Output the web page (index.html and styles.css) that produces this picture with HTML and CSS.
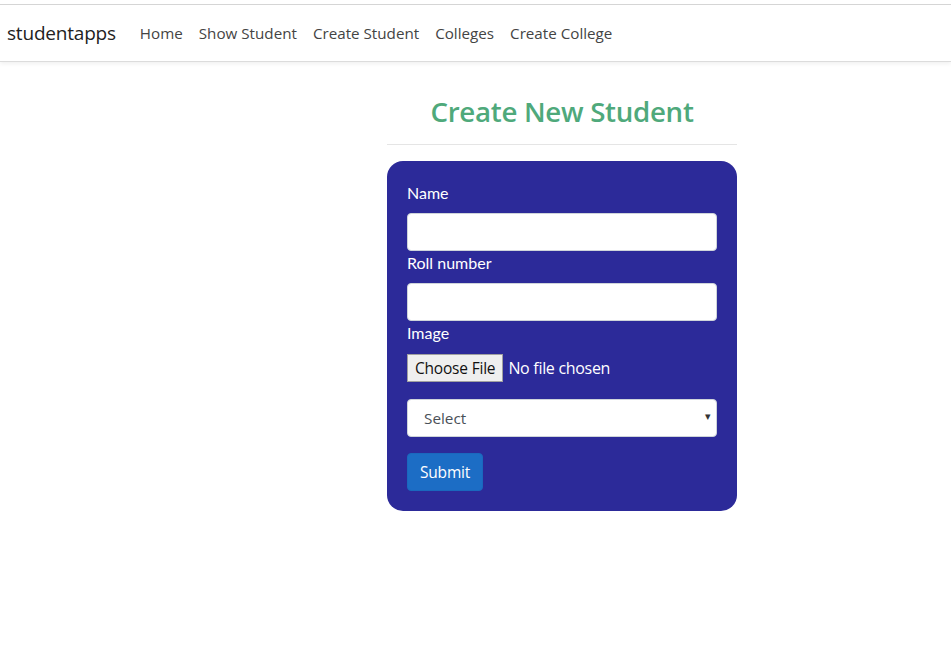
FILE: index.html
```html
<!DOCTYPE html>
<html lang="en">
<head>
<meta charset="utf-8">
<title>studentapps</title>
<link rel="stylesheet" href="styles.css">
</head>
<body>
<div class="topgap"></div>
<nav class="navbar">
  <a class="brand" href="#">studentapps</a>
  <ul class="nav">
    <li><a href="#">Home</a></li>
    <li><a href="#">Show Student</a></li>
    <li><a href="#">Create Student</a></li>
    <li><a href="#">Colleges</a></li>
    <li><a href="#">Create College</a></li>
  </ul>
</nav>
<main class="main">
  <h1 class="title">Create New Student</h1>
  <hr class="rule">
  <form class="card">
    <label class="label" for="name">Name</label>
    <input class="field" id="name" type="text">
    <label class="label" for="roll">Roll number</label>
    <input class="field" id="roll" type="text">
    <label class="label" for="img">Image</label>
    <div class="file-row">
      <span class="file-btn">Choose File</span>
      <span class="file-text">No file chosen</span>
    </div>
    <div class="select-wrap">
      <select class="select">
        <option>Select</option>
      </select>
      <span class="caret">&#9662;</span>
    </div>
    <button class="submit" type="button">Submit</button>
  </form>
</main>
</body>
</html>
```
FILE: styles.css
```css
* { box-sizing: border-box; }
html, body { margin: 0; padding: 0; background: #fff; }
body { font-family: "Open Sans", "Noto Sans", sans-serif; }

.topgap { height: 5px; border-bottom: 1px solid #d6d6d6; }

.navbar {
  height: 57px;
  display: flex;
  align-items: center;
  padding: 0 7px;
  border-bottom: 1px solid #dcdcdc;
  box-shadow: 0 2px 4px rgba(0,0,0,0.06);
}
.brand {
  font-size: 19px;
  color: #222;
  text-decoration: none;
  margin-right: 24px;
  letter-spacing: -0.2px;
}
.nav { display: flex; list-style: none; margin: 0; padding: 0; gap: 16px; }
.nav a {
  font-size: 15.2px;
  color: #444;
  text-decoration: none;
}

.main { width: 350px; margin-left: 387px; padding-top: 29px; }
.title {
  margin: 0;
  text-align: center;
  font-size: 27.7px;
  font-weight: 600;
  color: #4fa97b;
  line-height: 40px;
  letter-spacing: -0.3px;
}
.rule { margin: 13px 0 16px; border: 0; border-top: 1px solid #e5e5e5; }

.card {
  background: #2c2a99;
  border-radius: 16px;
  padding: 22px 20px 20px;
  display: flex;
  flex-direction: column;
  font-family: "Lato", "Open Sans", sans-serif;
}
.label { color: #fff; font-size: 16px; line-height: 20px; margin-bottom: 10px; }
.field {
  height: 38px;
  border: 1px solid #ced4da;
  border-radius: 4px;
  background: #fff;
  margin-bottom: 2px;
  font-size: 16px;
}
.file-row { display: flex; align-items: center; gap: 5px; height: 29px; }
.file-btn {
  background: #efefef;
  border: 1px solid #a0a0a0;
  color: #111;
  font-family: "Open Sans", sans-serif;
  font-size: 15.5px;
  padding: 2px 7px;
  line-height: 22px;
  letter-spacing: -0.2px;
}
.file-text { color: #fff; font-size: 16px; font-family: "Open Sans", sans-serif; letter-spacing: -0.3px; }

.select-wrap { position: relative; margin-top: 17px; }
.select {
  width: 100%;
  height: 38px;
  appearance: none;
  -webkit-appearance: none;
  border: 1px solid #ced4da;
  border-radius: 4px;
  background: #fff;
  padding-left: 16px;
  font-family: "Open Sans", sans-serif;
  font-size: 15.3px;
  color: #495057;
}
.caret {
  position: absolute;
  right: 6px;
  top: 10px;
  font-size: 11px;
  color: #333;
  pointer-events: none;
}
.submit {
  align-self: flex-start;
  margin-top: 16px;
  height: 38px;
  padding: 0 12px;
  background: #1c6dc5;
  border: 1px solid #1a68bd;
  border-radius: 4px;
  color: #fff;
  font-family: "Open Sans", sans-serif;
  font-size: 15.5px;
  letter-spacing: -0.2px;
}
```
